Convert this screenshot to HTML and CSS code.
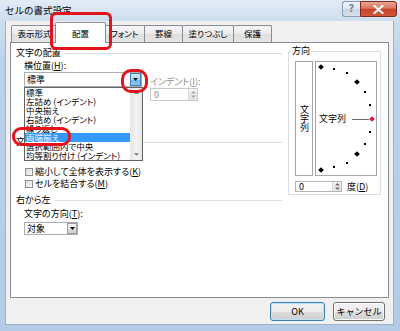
FILE: index.html
```html
<!DOCTYPE html>
<html lang="ja">
<head>
<meta charset="utf-8">
<title>セルの書式設定</title>
<link rel="stylesheet" href="styles.css">
</head>
<body>
<div class="window">
  <div class="titlebar">
    <span class="title">セルの書式設定</span>
    <div class="caption-btns">
      <span class="cbtn help">?</span>
      <span class="cbtn close"><svg width="11" height="9" viewBox="0 0 11 9"><path d="M1.5 1 L9.5 8 M9.5 1 L1.5 8" stroke="#fff" stroke-width="2.2" stroke-linecap="round"/></svg></span>
    </div>
  </div>
  <div class="client">
    <div class="tabs">
      <div class="tab w1">表示形式</div>
      <div class="tab sel w2">配置</div>
      <div class="tab w3">フォント</div>
      <div class="tab w4">罫線</div>
      <div class="tab w5">塗りつぶし</div>
      <div class="tab w6">保護</div>
    </div>
    <div class="panel">
      <div class="left">
        <div class="group-title"><span>文字の配置</span></div>
        <div class="label">横位置(<u>H</u>):</div>
        <div class="hrow">
          <div class="combo wide"><span class="combo-text">標準</span><span class="dd hot"><svg width="5" height="3" viewBox="0 0 5 3"><path d="M0 0 H5 L2.5 3 Z" fill="#0c1a2c"/></svg></span></div>
          <div class="indent">
            <div class="label-plain dis">インデント(<u>I</u>):</div>
            <div class="spin wide-spin"><span class="spin-text">0</span><span class="spin-btns"><svg width="7" height="9" viewBox="0 0 7 9"><path d="M1 3.5 L3.5 1 L6 3.5 Z M1 5.5 L3.5 8 L6 5.5 Z" fill="#a8a8a8"/></svg></span></div>
          </div>
        </div>
        <div class="group-title ctrl"><span>文字の制御</span></div>
        <div class="check first"><span class="box"></span>縮小して全体を表示する(<u>K</u>)</div>
        <div class="check"><span class="box"></span>セルを結合する(<u>M</u>)</div>
        <div class="group-title rtl"><span>右から左</span></div>
        <div class="label dirlabel">文字の方向(<u>T</u>):</div>
        <div class="combo small"><span class="combo-text">対象</span><span class="dd"><svg width="5" height="3" viewBox="0 0 5 3"><path d="M0 0 H5 L2.5 3 Z" fill="#000"/></svg></span></div>
      </div>
      <div class="right">
        <fieldset class="orient">
          <legend>方向</legend>
          <div class="dial-row">
            <div class="vbox">文字列</div>
            <div class="dial">
              <svg class="dial-svg" width="60" height="113" viewBox="0 0 60 113">
                <g fill="#000">
                  <rect x="3" y="3" width="4" height="4" transform="rotate(45 5 5)"/>
                  <rect x="39" y="18" width="4" height="4" transform="rotate(45 41 20)"/>
                  <rect x="39" y="90" width="4" height="4" transform="rotate(45 41 92)"/>
                  <rect x="3" y="106" width="4" height="4" transform="rotate(45 5 108)"/>
                  <rect x="17" y="6" width="2" height="2"/>
                  <rect x="30" y="10" width="2" height="2"/>
                  <rect x="48" y="29" width="2" height="2"/>
                  <rect x="53" y="42" width="2" height="2"/>
                  <rect x="53" y="69" width="2" height="2"/>
                  <rect x="48" y="81" width="2" height="2"/>
                  <rect x="30" y="100" width="2" height="2"/>
                  <rect x="17" y="104" width="2" height="2"/>
                </g>
                <line x1="36" y1="57.5" x2="53" y2="57.5" stroke="#6e6e6e" stroke-width="1"/>
                <rect x="54" y="55" width="4" height="4" transform="rotate(45 56 57)" fill="#e0143c"/>
              </svg>
              <span class="dial-text">文字列</span>
            </div>
          </div>
          <div class="deg-row">
            <div class="spin deg-spin"><span class="spin-text">0</span><span class="spin-btns"><svg width="7" height="9" viewBox="0 0 7 9"><path d="M1 3.5 L3.5 1 L6 3.5 Z M1 5.5 L3.5 8 L6 5.5 Z" fill="#6a6a6a"/></svg></span></div>
            <span class="deg-label">度(<u>D</u>)</span>
          </div>
        </fieldset>
      </div>
      <div class="listbox">
        <div class="items">
          <div class="item">標準</div>
          <div class="item">左詰め (インデント)</div>
          <div class="item">中央揃え</div>
          <div class="item">右詰め (インデント)</div>
          <div class="item">繰り返し</div>
          <div class="item selected">両端揃え</div>
          <div class="item">選択範囲内で中央</div>
          <div class="item">均等割り付け (インデント)</div>
        </div>
        <div class="scrollbar">
          <span class="sb-arrow"><svg width="5" height="3" viewBox="0 0 5 3"><path d="M0 3 H5 L2.5 0 Z" fill="#8a8a8a"/></svg></span>
          <span class="sb-arrow"><svg width="5" height="3" viewBox="0 0 5 3"><path d="M0 0 H5 L2.5 3 Z" fill="#8a8a8a"/></svg></span>
        </div>
      </div>
    </div>
    <div class="buttons">
      <button class="btn default">OK</button>
      <button class="btn">キャンセル</button>
    </div>
  </div>
  <div class="mark mark-tab"></div>
  <div class="mark mark-dd"></div>
  <div class="mark mark-item"></div>
</div>
</body>
</html>
```

FILE: styles.css
```css
* { box-sizing: border-box; margin: 0; padding: 0; }
html, body { width: 400px; height: 331px; overflow: hidden; }
body {
  font-family: "Noto Sans CJK JP", "Noto Sans", sans-serif;
  font-size: 9px;
  line-height: 10px;
  color: #000;
  font-feature-settings: "palt";
}
u { text-decoration: underline; text-underline-offset: 1px; }

.window {
  position: relative;
  width: 400px;
  height: 331px;
  background: linear-gradient(to bottom, #e2ebf5 0px, #cfdeee 20px, #bcd2e9 60px, #b3cbe5 331px);
  display: flex;
  flex-direction: column;
}

.titlebar {
  height: 21px;
  display: flex;
  justify-content: space-between;
  align-items: flex-start;
  padding: 0 3px 0 5px;
}
.title { font-size: 9.5px; line-height: 12px; margin-top: 4px; color: #000; font-feature-settings: normal; }
.caption-btns { display: flex; margin-top: 1px; }
.cbtn {
  height: 16px;
  display: flex;
  align-items: center;
  justify-content: center;
}
.help {
  width: 18px;
  border: 1px solid #8a9cb2;
  border-right: none;
  border-radius: 3px 0 0 3px;
  background: linear-gradient(to bottom, #eef3f8 0%, #dde6ef 50%, #c8d5e3 51%, #d6e1ec 100%);
  color: #7a8594;
  font-family: "DejaVu Sans", sans-serif;
  font-size: 10px;
  font-weight: bold;
}
.close {
  width: 37px;
  border: 1px solid #7b2a22;
  border-radius: 0 3px 3px 0;
  background: linear-gradient(to bottom, #e7a596 0%, #d8765f 45%, #c7442c 50%, #d0583c 100%);
}

.client {
  margin: 0 6px 0 5px;
  height: 304px;
  background: #f0f0f0;
  border: 1px solid #9db1c7;
  border-top: none;
  display: flex;
  flex-direction: column;
}

.tabs {
  height: 21px;
  display: flex;
  align-items: flex-end;
  padding-left: 5px;
  position: relative;
  z-index: 2;
}
.tab {
  height: 17px;
  border: 1px solid #898c95;
  border-bottom: none;
  margin-right: -1px;
  padding-top: 2px;
  text-align: center;
  font-size: 8.5px;
  line-height: 10px;
  background: linear-gradient(to bottom, #f6f6f6 0%, #ebebeb 50%, #dfdfdf 51%, #e5e5e5 100%);
  border-radius: 2px 2px 0 0;
}
.tab.sel {
  height: 21px;
  margin: 0 -2px -1px -2px;
  padding-top: 5px;
  background: #fff;
  position: relative;
  z-index: 3;
}
.w1 { width: 47px; }
.w2 { width: 51px; }
.w3 { width: 41px; }
.w4 { width: 39px; }
.w5 { width: 52px; }
.w6 { width: 39px; }

.panel {
  position: relative;
  margin-left: 4px;
  width: 379px;
  height: 256px;
  border: 1px solid #898c95;
  background: #fff;
  display: flex;
  padding: 4px 0 0 5px;
}

.left { width: 266px; padding-top: 1px; }
.right { width: 93px; margin-left: 6px; }

.group-title {
  height: 10px;
  display: flex;
  align-items: center;
}
.group-title::after {
  content: "";
  flex: 1;
  height: 1px;
  margin-left: 4px;
  background: #d5dfe5;
}
.label { margin-top: 3px; margin-left: 8px; height: 10px; }
.label-plain { height: 10px; }
.dis { color: #8d8d8d; }

.hrow { display: flex; margin-left: 8px; margin-top: 1px; height: 29px; }

.combo {
  height: 15px;
  border: 1px solid #abadb3;
  background: #fff;
  display: flex;
  align-items: center;
  padding-left: 2px;
}
.combo-text { flex: 1; line-height: 10px; }
.combo.wide { width: 118px; }
.combo.small { width: 54px; height: 13px; margin-left: 8px; margin-top: 3px; }
.dd {
  width: 11px;
  height: 13px;
  display: flex;
  align-items: center;
  justify-content: center;
  border: 1px solid #9a9a9a;
  background: linear-gradient(to bottom, #f2f2f2 0%, #ebebeb 50%, #dcdcdc 51%, #d2d2d2 100%);
}
.combo.small .dd { width: 10px; height: 11px; }
.dd.hot {
  border-color: #3c7fb1;
  background: linear-gradient(to bottom, #cfe9fa 0%, #a9d7f5 50%, #6fb7e8 51%, #8cc6ee 100%);
}

.indent { margin-left: 8px; margin-top: 5px; }
.spin {
  border: 1px solid #c9c9c9;
  background: #fff;
  display: flex;
  align-items: center;
}
.wide-spin { width: 48px; height: 13px; margin-top: 1px; }
.spin-text { flex: 1; padding-left: 3px; color: #8d8d8d; line-height: 10px; }
.spin-btns {
  width: 9px;
  height: 100%;
  display: flex;
  align-items: center;
  justify-content: center;
  background: linear-gradient(to bottom, #f4f4f4, #e4e4e4);
  border-left: 1px solid #d8d8d8;
}

.ctrl { margin-top: 36px; }

.check {
  height: 11px;
  line-height: 11px;
  display: flex;
  align-items: center;
  margin-top: 1px;
}
.check.first { margin-top: 19px; }
.box {
  width: 8px;
  height: 8px;
  margin-left: 9px;
  margin-right: 2px;
  border: 1px solid #8f8f8f;
  background: linear-gradient(135deg, #dcdcdc, #f6f6f6);
}

.rtl { margin-top: 6px; }
.dirlabel { margin-top: 4px; }

/* orientation group */
.orient {
  margin-top: -1px;
  width: 93px;
  border: 1px solid #d5dfe5;
  padding: 5px 3px 2px 6px;
}
.orient legend {
  margin-left: -4px;
  padding: 0 1px;
  line-height: 10px;
  height: 10px;
}
.dial-row { display: flex; height: 115px; }
.vbox {
  width: 18px;
  height: 115px;
  border: 1px solid #a5a5a5;
  display: flex;
  align-items: center;
  justify-content: center;
  writing-mode: vertical-rl;
  text-orientation: upright;
  line-height: 10px;
}
.dial {
  width: 62px;
  height: 115px;
  margin-left: 2px;
  border: 1px solid #a5a5a5;
  position: relative;
  display: flex;
  align-items: center;
  padding-left: 3px;
}
.dial-svg { position: absolute; left: 0; top: 0; }
.dial-text { position: relative; line-height: 10px; }

.deg-row { display: flex; align-items: center; margin-top: 5px; height: 11px; }
.deg-spin { width: 47px; height: 11px; border-color: #b5b5b5; }
.deg-spin .spin-text { color: #000; }
.deg-label { margin-left: 5px; }

/* dropdown list overlay */
.listbox {
  position: absolute;
  left: 13px;
  top: 44px;
  width: 119px;
  border: 1px solid #646464;
  background: #fff;
  display: flex;
  z-index: 5;
}
.items { flex: 1; }
.item { height: 9px; line-height: 9px; font-size: 8.5px; padding-left: 1px; white-space: nowrap; }
.item.selected { background: #3399ff; color: #fff; }
.scrollbar {
  width: 12px;
  background: linear-gradient(to right, #e6e6e6, #f4f4f4 50%, #e6e6e6);
  border-left: 1px solid #e9e9e9;
  display: flex;
  flex-direction: column;
  justify-content: space-between;
  align-items: center;
  padding: 3px 0;
}
.sb-arrow { display: flex; height: 4px; }

/* bottom buttons */
.buttons {
  display: flex;
  justify-content: flex-end;
  margin-top: 4px;
  padding-right: 8px;
}
.btn {
  height: 19px;
  font-family: inherit;
  font-size: 9px;
  line-height: 10px;
  color: #000;
  border: 1px solid #707070;
  border-radius: 3px;
  background: linear-gradient(to bottom, #f2f2f2 0%, #ebebeb 50%, #dddddd 51%, #cfcfcf 100%);
  box-shadow: inset 0 0 0 1px #fcfcfc;
  width: 52px;
  margin-left: 8px;
}
.btn.default { width: 55px; border-color: #3c7fb1; box-shadow: inset 0 0 0 1px #b9e3f9; }

/* red annotation marks */
.mark {
  position: absolute;
  border: 3px solid #e3141c;
  z-index: 10;
}
.mark-tab { left: 50px; top: 12px; width: 62px; height: 38px; border-radius: 6px; }
.mark-dd { left: 121px; top: 69px; width: 27px; height: 24px; border-radius: 10px; }
.mark-item { left: 12px; top: 127px; width: 59px; height: 19px; border-radius: 9px; }
```
